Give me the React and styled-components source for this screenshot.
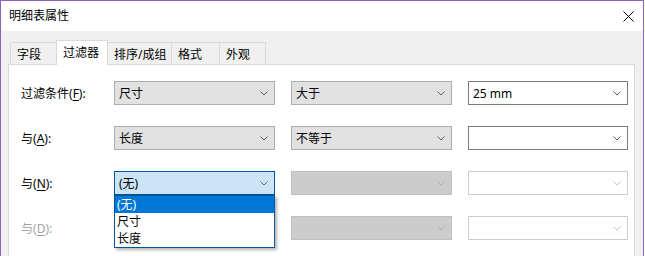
import React from 'react';
import styled, { createGlobalStyle, css } from 'styled-components';

const GlobalStyle = createGlobalStyle`
  html, body {
    margin: 0;
    padding: 0;
    background: #ffffff;
  }
  body {
    font-family: "Noto Sans", "Noto Sans CJK SC", sans-serif;
    font-size: 12px;
    color: #000000;
  }
`;

const tabs = [
  { text: '字段', width: 47 },
  { text: '过滤器', width: 52, active: true },
  { text: '排序/成组', width: 65 },
  { text: '格式', width: 49 },
  { text: '外观', width: 47 },
];

const rows = [
  {
    label: '过滤条件',
    key: 'F',
    field: { text: '尺寸', variant: 'readonly' },
    op: { text: '大于', variant: 'readonly' },
    value: { text: '25 mm', variant: 'edit' },
  },
  {
    label: '与',
    key: 'A',
    field: { text: '长度', variant: 'readonly' },
    op: { text: '不等于', variant: 'readonly' },
    value: { text: '', variant: 'edit' },
  },
  {
    label: '与',
    key: 'N',
    field: { text: '(无)', variant: 'focus', open: true },
    op: { text: '', variant: 'disabledReadonly' },
    value: { text: '', variant: 'disabledEdit' },
  },
  {
    label: '与',
    key: 'D',
    disabled: true,
    field: { text: '', variant: 'disabledReadonly' },
    op: { text: '', variant: 'disabledReadonly' },
    value: { text: '', variant: 'disabledEdit' },
  },
];

const listItems = ['(无)', '尺寸', '长度'];

const variants = {
  readonly: { bg: '#e1e1e1', border: '#adadad', arrow: '#606060' },
  focus: { bg: '#cce4f7', border: '#005499', arrow: '#606060' },
  edit: { bg: '#ffffff', border: '#7a7a7a', arrow: '#606060' },
  disabledReadonly: { bg: '#cccccc', border: '#bfbfbf', arrow: '#b0b0b0' },
  disabledEdit: { bg: '#ffffff', border: '#cccccc', arrow: '#c4c4c4' },
};

const Chevron = ({ color }) => (
  <svg width="8" height="5" viewBox="0 0 8 5">
    <polyline points="0.5,0.5 4,4 7.5,0.5" fill="none" stroke={color} strokeWidth="1" />
  </svg>
);

const Combo = ({ text, variant, open }) => (
  <ComboBox variant={variant}>
    <ComboText>{text}</ComboText>
    <Chevron color={variants[variant].arrow} />
    {open && (
      <DropList>
        {listItems.map((item, i) => (
          <DropItem key={item} selected={i === 0}>
            {item}
          </DropItem>
        ))}
      </DropList>
    )}
  </ComboBox>
);

const App = () => {
  return (
    <>
      <GlobalStyle />
      <Window>
        <TitleBar>
          <Title>明细表属性</Title>
          <CloseButton>
            <svg width="11" height="11" viewBox="0 0 11 11">
              <path d="M0.5 0.5 L10.5 10.5 M10.5 0.5 L0.5 10.5" stroke="#000" strokeWidth="1" />
            </svg>
          </CloseButton>
        </TitleBar>

        <Body>
          <TabStrip>
            {tabs.map((t) => (
              <Tab key={t.text} active={t.active} width={t.width}>
                {t.text}
              </Tab>
            ))}
          </TabStrip>

          <Panel>
            <FilterGrid>
              {rows.map((r) => (
                <React.Fragment key={r.key}>
                  <Label disabled={r.disabled}>
                    {r.label}(<u>{r.key}</u>):
                  </Label>
                  <Combo {...r.field} />
                  <Combo {...r.op} />
                  <Combo {...r.value} />
                </React.Fragment>
              ))}
            </FilterGrid>
          </Panel>
        </Body>
      </Window>
    </>
  );
};

// WINDOW
const Window = styled.div`
  width: 644px;
  height: 256px;
  box-sizing: border-box;
  border: 1px solid #8a63c0;
  border-bottom: none;
  background: #f0f0f0;
  display: flex;
  flex-direction: column;
  overflow: hidden;
`;

const TitleBar = styled.div`
  height: 30px;
  flex-shrink: 0;
  background: #ffffff;
  display: flex;
  align-items: center;
  justify-content: space-between;
  padding: 0 9px 0 8px;
`;

const Title = styled.div`
  font-size: 12px;
  line-height: 16px;
`;

const CloseButton = styled.div`
  display: flex;
  align-items: center;
`;

const Body = styled.div`
  flex: 1;
  display: flex;
  flex-direction: column;
  padding: 9px 8px 0 7px;
`;

// TABS
const TabStrip = styled.div`
  display: flex;
  align-items: flex-end;
  padding-left: 2px;
  position: relative;
  z-index: 1;
`;

const Tab = styled.div`
  box-sizing: border-box;
  width: ${(p) => p.width}px;
  height: 22px;
  padding: 0 6px;
  border: 1px solid #d9d9d9;
  border-bottom: none;
  background: #f0f0f0;
  display: flex;
  align-items: center;
  white-space: nowrap;
  & + & {
    margin-left: -1px;
  }
  ${(p) =>
    p.active &&
    css`
      height: 25px;
      margin-bottom: -1px;
      padding: 0 6px 2px;
      background: #ffffff;
      position: relative;
      z-index: 2;
    `}
`;

const Panel = styled.div`
  flex: 1;
  background: #ffffff;
  border: 1px solid #d9d9d9;
  border-bottom: none;
`;

// FILTERS
const FilterGrid = styled.div`
  display: grid;
  grid-template-columns: 77px 161px 161px 160px;
  grid-auto-rows: 24px;
  column-gap: 16px;
  row-gap: 21px;
  padding: 16px 0 0 12px;
`;

const Label = styled.div`
  display: flex;
  align-items: center;
  white-space: nowrap;
  color: ${(p) => (p.disabled ? '#a3a3a3' : '#000000')};
  u {
    text-underline-offset: 2px;
  }
`;

const ComboBox = styled.div`
  position: relative;
  box-sizing: border-box;
  height: 24px;
  padding: 0 6px 0 4px;
  display: flex;
  align-items: center;
  justify-content: space-between;
  background: ${(p) => variants[p.variant].bg};
  border: 1px solid ${(p) => variants[p.variant].border};
`;

const ComboText = styled.span`
  white-space: nowrap;
`;

const DropList = styled.div`
  position: absolute;
  top: 23px;
  left: -1px;
  right: -1px;
  box-sizing: border-box;
  border: 1px solid #005499;
  background: #ffffff;
  box-shadow: 2px 2px 3px rgba(0, 0, 0, 0.3);
  z-index: 5;
`;

const DropItem = styled.div`
  height: 17px;
  line-height: 17px;
  padding-left: 2px;
  background: ${(p) => (p.selected ? '#0078d7' : '#ffffff')};
  color: ${(p) => (p.selected ? '#ffffff' : '#000000')};
`;

export default App;
